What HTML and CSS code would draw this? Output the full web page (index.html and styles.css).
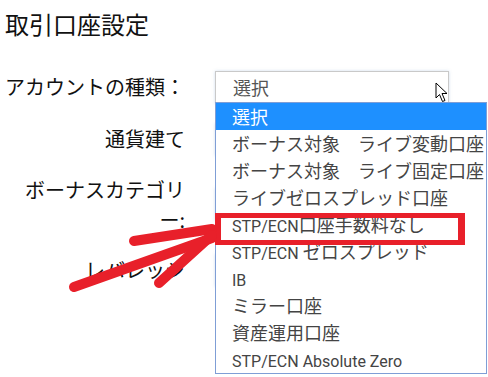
FILE: index.html
```html
<!DOCTYPE html>
<html lang="ja">
<head>
<meta charset="utf-8">
<title>取引口座設定</title>
<link rel="stylesheet" href="styles.css">
</head>
<body>
<div class="page">
  <h1 class="title">取引口座設定</h1>
  <div class="form">
    <div class="row">
      <div class="label">アカウントの種類：</div>
      <div class="field"><div class="select">選択</div></div>
    </div>
    <div class="row">
      <div class="label">通貨建て</div>
      <div class="field"><div class="select"></div></div>
    </div>
    <div class="row">
      <div class="label">ボーナスカテゴリ<br>ー:</div>
      <div class="field"><div class="select"></div></div>
    </div>
    <div class="row">
      <div class="label">レバレッジ</div>
      <div class="field"><div class="select"></div></div>
    </div>
    <div class="row note-row">
      <div class="label"></div>
      <div class="field"><div class="note"><span class="check"></span>追加規約に同意する</div></div>
    </div>
  </div>

  <ul class="dropdown">
    <li class="opt active">選択</li>
    <li class="opt">ボーナス対象　ライブ変動口座</li>
    <li class="opt">ボーナス対象　ライブ固定口座</li>
    <li class="opt">ライブゼロスプレッド口座</li>
    <li class="opt"><span class="lat">STP/ECN</span>口座手数料なし</li>
    <li class="opt"><span class="lat">STP/ECN </span>ゼロスプレッド</li>
    <li class="opt"><span class="lat">IB</span></li>
    <li class="opt">ミラー口座</li>
    <li class="opt">資産運用口座</li>
    <li class="opt"><span class="lat">STP/ECN Absolute Zero</span></li>
  </ul>

  <svg class="cursor" width="14" height="21" viewBox="0 0 14 21">
    <path d="M1 1 L1 16 L4.5 12.5 L7.5 19.5 L10 18.5 L7 11.5 L12 11.5 Z" fill="#fff" stroke="#000" stroke-width="1" stroke-linejoin="miter"/>
  </svg>

  <div class="highlight-box"></div>
  <svg class="arrow" width="488" height="377" viewBox="0 0 488 377">
    <g stroke="#e8202a" stroke-width="10" stroke-linecap="round" fill="none">
      <line x1="74" y1="287" x2="212" y2="238"/>
      <line x1="134" y1="241" x2="212" y2="229"/>
      <line x1="159" y1="283" x2="212" y2="235"/>
    </g>
  </svg>
</div>
</body>
</html>
```
FILE: styles.css
```css
html, body {
  margin: 0;
  padding: 0;
  background: #fff;
}
body {
  font-family: Roboto, "Noto Sans CJK JP", sans-serif;
  color: #111;
  overflow: hidden;
  width: 488px;
  height: 377px;
}
.page {
  position: relative;
  width: 488px;
  height: 377px;
  padding: 8px 0 0 5px;
  box-sizing: border-box;
  overflow: hidden;
}
.title {
  margin: 0;
  font-size: 24px;
  font-weight: 400;
  line-height: 32px;
  font-family: "Noto Sans CJK JP", sans-serif;
}
.form {
  margin-top: 30.5px;
  display: flex;
  flex-direction: column;
  gap: 19px;
}
.row {
  display: grid;
  grid-template-columns: 180px 234px;
  column-gap: 30px;
  align-items: center;
  min-height: 33px;
}
.label {
  font-family: "Noto Sans CJK JP", sans-serif;
  font-size: 20px;
  line-height: 30px;
  text-align: right;
  color: #111;
  white-space: nowrap;
}
.select {
  height: 33px;
  box-sizing: border-box;
  border: 1px solid #c9c9c9;
  box-shadow: 0 0 3px rgba(120, 160, 210, 0.35);
  background: #fff;
  padding-left: 17px;
  font-size: 18px;
  line-height: 31px;
  color: #555;
  font-family: "Noto Sans CJK JP", sans-serif;
}
.note-row {
  margin-top: 67.5px;
}
.note {
  margin-left: 13px;
  width: 182px;
  height: 24px;
  background: #fdf9d8;
  font-size: 14px;
  line-height: 24px;
  color: #333;
  display: flex;
  align-items: center;
  gap: 6px;
  padding-left: 4px;
  box-sizing: border-box;
  overflow: hidden;
  white-space: nowrap;
}
.check {
  width: 12px;
  height: 12px;
  border: 1px solid #999;
  background: #eee;
  flex: none;
}
.dropdown {
  position: absolute;
  left: 215px;
  top: 102px;
  width: 272px;
  margin: 0;
  padding: 0;
  list-style: none;
  border: 1px solid #7f9ed6;
  background: #fff;
  box-sizing: border-box;
}
.opt {
  height: 27px;
  line-height: 27px;
  padding-left: 16px;
  font-size: 18px;
  color: #444;
  white-space: nowrap;
  overflow: hidden;
  font-family: "Noto Sans CJK JP", sans-serif;
}
.lat {
  font-family: Roboto, sans-serif;
  font-size: 16px;
}
.opt.active {
  background: #1e90ff;
  color: #fff;
}
.cursor {
  position: absolute;
  left: 435px;
  top: 82px;
}
.highlight-box {
  position: absolute;
  left: 215px;
  top: 213px;
  width: 250px;
  height: 32px;
  box-sizing: border-box;
  border-style: solid;
  border-color: #e8202a;
  border-width: 5px 7px 5px 6px;
}
.arrow {
  position: absolute;
  left: 0;
  top: 0;
}
```
